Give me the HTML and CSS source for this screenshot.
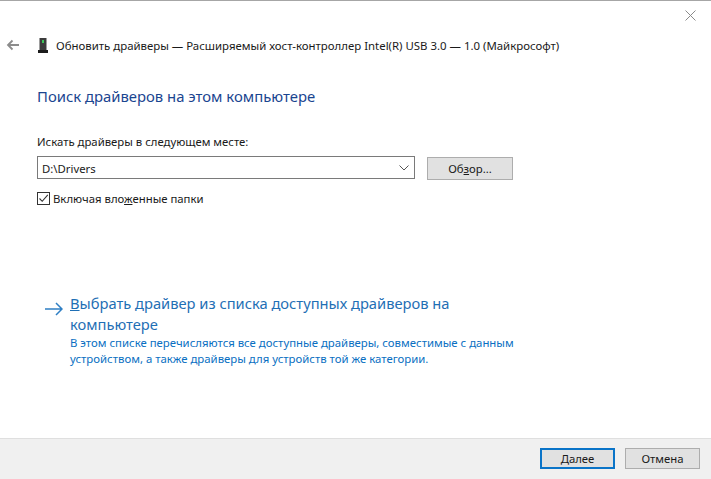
FILE: index.html
```html
<!DOCTYPE html>
<html lang="ru">
<head>
<meta charset="utf-8">
<title>Обновить драйверы</title>
<link rel="stylesheet" href="styles.css">
</head>
<body>
<div class="dialog">
  <div class="titlebar">
    <svg class="close" width="11" height="11" viewBox="0 0 11 11"><path d="M.5.5l10 10M10.5.5l-10 10" stroke="#8a8a8a" stroke-width="1" fill="none"/></svg>
  </div>
  <div class="header">
    <svg class="back" width="14" height="12" viewBox="0 0 14 12"><path d="M13 6H2M6.500 1.500 2 6l4.500 4.500" stroke="#8c8c8c" stroke-width="1.800" fill="none"/></svg>
    <svg class="device" width="10" height="15" viewBox="0 0 10 15"><rect x="1.500" y="0" width="7" height="12" fill="#3c3c3c"/><rect x="4" y="2" width="2" height="3" fill="#3ec45a"/><rect x="0" y="12" width="10" height="3" fill="#1c1c1c"/></svg>
    <span class="title">Обновить драйверы — Расширяемый хост-контроллер Intel(R) USB 3.0 — 1.0 (Майкрософт)</span>
  </div>
  <main class="content">
    <h1 class="heading">Поиск драйверов на этом компьютере</h1>
    <div class="label">Искать драйверы в следующем месте:</div>
    <div class="path-row">
      <div class="combo">
        <span>D:\Drivers</span>
        <svg width="10" height="6" viewBox="0 0 10 6"><path d="M.5.500 5 5 9.500.500" stroke="#555" stroke-width="1" fill="none"/></svg>
      </div>
      <button class="btn browse">Об<u>з</u>ор...</button>
    </div>
    <div class="check-row">
      <span class="check"><svg width="11" height="11" viewBox="0 0 11 11"><path d="M1.500 5.500 4.200 8.300 9.800 1.800" stroke="#333" stroke-width="1.100" fill="none"/></svg></span>
      <span>Включая вло<u>ж</u>енные папки</span>
    </div>
    <div class="link-row">
      <svg class="arrow" width="18" height="14" viewBox="0 0 18 14"><path d="M0 7h17M11 1l6 6-6 6" stroke="#2f7fc4" stroke-width="1.500" fill="none"/></svg>
      <div class="link-body">
        <div class="link-title"><u>В</u>ыбрать драйвер из списка доступных драйверов на компьютере</div>
        <div class="link-desc">В этом списке перечисляются все доступные драйверы, совместимые с данным устройством, а также драйверы для устройств той же категории.</div>
      </div>
    </div>
  </main>
  <footer class="footer">
    <button class="btn primary"><u>Д</u>алее</button>
    <button class="btn cancel">Отмена</button>
  </footer>
</div>
</body>
</html>
```
FILE: styles.css
```css
* { box-sizing: border-box; }
html, body { margin: 0; padding: 0; }
body {
  width: 711px;
  height: 479px;
  overflow: hidden;
  background: #fff;
  font-family: "Noto Sans", "Open Sans", sans-serif;
  font-size: 11.35px;
  color: #1a1a1a;
}
.dialog {
  display: flex;
  flex-direction: column;
  height: 479px;
  border-top: 1px solid #a6a6a6;
}
.titlebar {
  display: flex;
  justify-content: flex-end;
  padding: 9px 15px 0 0;
  height: 30px;
}
.close { display: block; }
.header {
  display: flex;
  align-items: center;
  height: 28px;
  padding-left: 6px;
}
.back { margin-right: 18px; }
.device { margin-right: 8px; }
.title { font-size: 11.42px; white-space: nowrap; }
.content {
  flex: 1;
  padding: 0 0 0 37px;
}
.heading {
  margin: 0;
  padding-top: 27px;
  height: 75px;
  font-size: 14.85px;
  line-height: 20px;
  font-weight: 400;
  color: #1a4590;
}
.label { line-height: 16px; height: 22px; }
.path-row {
  display: flex;
  align-items: flex-start;
}
.combo {
  display: flex;
  align-items: center;
  justify-content: space-between;
  width: 378px;
  height: 23px;
  padding: 1px 5px 0 4px;
  border: 1px solid #7a7a7a;
  background: #fff;
}
.btn {
  font: inherit;
  color: #1a1a1a;
  background: #e1e1e1;
  border: 1px solid #adadad;
  padding: 0;
  height: 23px;
  width: 75px;
}
.browse {
  width: 86px;
  margin: 1px 0 0 12px;
}
.check-row {
  display: flex;
  align-items: center;
  gap: 3px;
  margin-top: 10px;
  height: 16px;
}
.check {
  display: flex;
  width: 13px;
  height: 13px;
  border: 1px solid #333;
  background: #fff;
}
.check svg { display: block; }
.link-row {
  display: flex;
  align-items: flex-start;
  margin: 87px 0 0 8px;
}
.arrow { margin: 9px 8px 0 0; flex: none; }
.link-body { width: 454px; margin-left: -1px; }
.link-title {
  width: 400px;
  font-size: 14.7px;
  line-height: 21px;
  color: #1f6fb5;
}
.link-desc {
  font-size: 11.38px;
  line-height: 16px;
  color: #0a6fc2;
}
.footer {
  display: flex;
  justify-content: flex-end;
  align-items: center;
  gap: 10px;
  height: 41px;
  padding: 0 11px 1px 0;
  background: #f0f0f0;
  border-top: 1px solid #dfdfdf;
}
.primary {
  height: 21px;
  border: 2px solid #0a74c8;
}
.cancel { height: 21px; }
```
